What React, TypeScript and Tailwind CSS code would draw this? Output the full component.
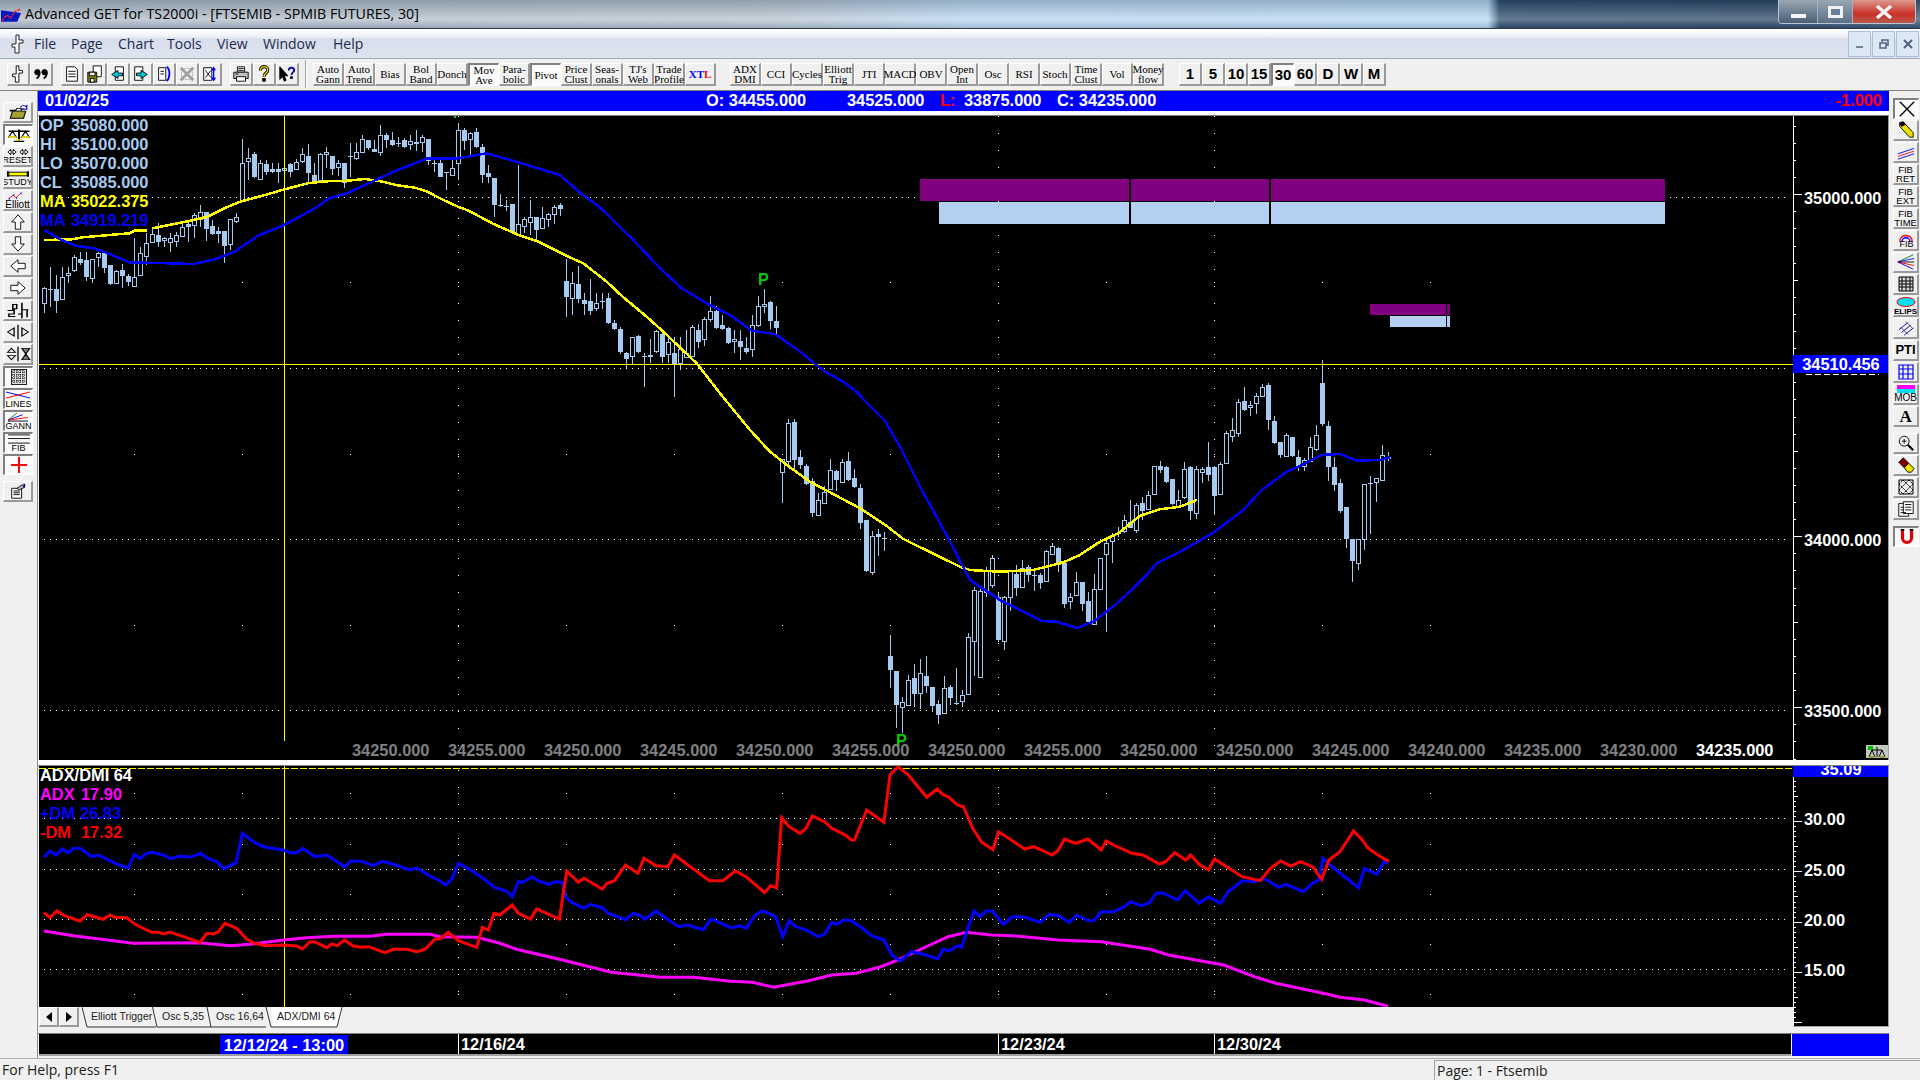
import type { ReactNode } from "react"

type Candle = [number, number, number, number, number]
type Pt = [number, number]

// candle rows are [wick high, body top, body bottom, wick low, filled], read off in thirds of a pixel
const segA: Candle[] = [
  [500,505,550,578,0],[440,508,508,560,1],[465,507,542,578,1],[440,470,537,540,0],[440,458,464,490,0],[405,412,450,455,0],[395,418,430,435,1],[395,420,470,482,1],[418,418,473,490,0],[395,400,412,440,0],
  [396,396,443,460,1],[435,435,493,495,1],[450,452,488,492,0],[432,451,469,505,1],[462,469,485,498,1],[355,470,498,502,0],[380,400,464,467,0],[340,370,408,435,0],[325,342,365,368,0],[310,345,365,382,1],
  [350,355,360,380,0],[340,354,366,395,0],[335,345,362,380,0],[310,320,347,350,0],[305,313,320,365,1],[280,284,314,355,0],[255,276,298,320,0],[275,276,326,362,1],[300,318,342,345,1],[320,333,342,370,1],
  [333,333,378,430,1],[298,298,372,390,0],[278,292,304,308,0],[58,130,240,245,0],[85,115,124,180,0],[97,102,170,175,1],[120,128,177,180,0],[120,133,155,165,1],[130,147,155,160,1],[128,147,155,188,1],
  [128,144,150,160,0],[128,132,155,170,1],[118,125,146,150,0],[85,103,124,130,0],[72,108,160,185,1],[130,165,187,190,1],[100,103,180,185,0],[80,97,103,145,0],[108,108,146,165,1],[120,130,140,168,0],
  [128,130,190,205,1],[70,108,108,170,1],[68,97,115,120,0],[45,58,95,97,0],[60,60,85,90,1],[60,87,95,97,1],[15,46,97,107,0],[40,46,60,85,1],[35,60,75,78,1],[52,68,68,82,1],
  [55,60,80,83,1],[45,62,73,90,0],[30,67,73,92,1],[45,52,67,95,0],[58,58,124,135,1],[110,130,130,157,1],[115,130,170,172,1],[155,155,155,210,1],[115,145,166,168,0],[10,30,130,180,0],
  [25,30,62,90,1],[35,40,58,108,0],[25,37,80,85,1],[72,82,165,188,1],[135,160,170,188,1],[175,175,255,290,1],[222,255,255,262,1],[240,257,257,272,1],[252,252,340,342,1],[135,313,345,345,0],
  [290,298,318,340,0],[240,290,305,345,0],[290,290,330,362,1],[262,293,325,327,0],[278,283,298,320,0],[255,262,283,312,0],[248,256,268,288,1],
]
const segB: Candle[] = [
  [58,124,170,230,1],[97,128,175,224,0],[78,132,176,188,1],[160,180,191,224,1],[118,183,212,224,1],[160,190,205,214,0],[160,184,184,208,1],[160,175,248,252,1],[240,250,268,270,1],[262,267,335,342,1],
  [335,340,358,385,1],[290,292,348,375,0],[285,289,335,338,1],[340,347,347,440,1],[298,344,349,368,0],[270,272,334,338,0],[275,282,350,368,1],[295,305,343,370,0],[292,340,373,470,1],[290,328,368,390,0],
  [270,340,350,350,0],[255,262,348,352,0],[252,270,305,325,1],[232,236,298,318,0],[168,214,238,245,0],[198,214,263,268,1],[225,255,268,270,1],[260,265,308,312,1],[270,298,304,340,0],[270,304,320,360,1],
  [292,324,335,342,1],[225,256,328,352,0],[168,199,254,260,0],[148,191,198,218,0],[184,186,242,268,1],[198,244,263,282,1],
]
const segC: Candle[] = [
  [658,658,695,788,0],[538,550,664,680,0],[538,546,660,690,1],[630,652,675,688,1],[672,678,732,735,1],[715,724,820,830,1],[760,780,824,826,0],[738,755,788,792,0],[658,691,746,748,0],[690,693,720,752,1],
  [658,667,725,728,0],[636,663,720,722,1],[688,714,741,744,1],[732,745,850,866,1],[840,840,994,996,1],[872,889,995,1004,0],[868,882,890,948,1],[877,893,893,933,1],
]
const segD: Candle[] = [
  [45,108,150,205,1],[153,153,255,323,1],[232,247,262,338,0],[165,181,255,258,0],[132,175,222,262,1],[118,160,218,268,0],[108,168,198,220,1],[201,201,258,276,1],[240,252,285,312,1],[168,205,278,282,0],
  [195,201,234,256,1],[145,248,248,256,1],[210,226,242,262,0],
]
const segE: Candle[] = [
  [40,52,222,225,0],[-100,-90,62,168,0],[-100,-88,170,172,0],[-160,-150,-84,-70,0],[-195,-186,-105,-95,0],[-80,-69,60,65,1],
]
const segF: Candle[] = [
  [738,742,872,900,0],[660,663,740,782,0],[645,672,714,738,1],[630,655,710,712,0],[645,652,675,695,1],[660,675,675,722,1],[670,675,698,716,1],[600,604,692,695,0],[580,589,611,615,0],[590,594,646,665,1],
  [635,640,762,775,1],[730,742,754,776,0],[667,697,735,737,0],[697,697,762,782,1],[725,753,816,818,1],[672,718,822,825,0],[625,625,718,720,0],[565,579,611,845,0],[548,559,574,638,0],[530,550,550,560,1],
  [495,511,544,550,0],[450,517,533,535,1],[460,466,540,550,0],[440,460,484,510,1],[423,436,476,480,0],[349,349,432,435,0],[333,349,360,368,1],[348,351,396,398,1],[388,388,462,465,1],[420,451,468,470,0],
  [335,358,440,448,0],[349,351,482,510,1],[349,358,488,508,0],[350,358,365,400,0],[277,351,375,392,1],[349,351,437,495,1],[336,343,431,435,0],[242,250,338,342,0],[205,241,257,276,0],[148,157,250,260,0],
  [110,154,180,183,1],[154,164,170,198,0],[128,137,158,192,0],[102,112,137,140,0],[100,105,209,240,1],[198,213,279,282,1],[276,276,315,325,1],[250,256,317,322,0],[262,262,319,322,1],[300,321,350,362,1],
  [325,329,349,362,0],[262,292,334,336,0],[225,256,298,302,0],[30,99,222,228,1],[212,228,351,392,1],[321,351,404,422,1],[388,400,483,490,1],[471,471,566,594,1],[568,568,632,695,1],[568,568,638,660,0],
  [403,403,566,600,0],[378,400,400,552,1],[385,385,395,456,0],[285,316,389,392,0],[306,322,328,332,1],
]
const segments: { x: number; y0: number; rows: Candle[] }[] = [
  { x: 44, y0: 120, rows: segA },
  { x: 566, y0: 240, rows: segB },
  { x: 782, y0: 240, rows: segC },
  { x: 890, y0: 620, rows: segD },
  { x: 968, y0: 620, rows: segE },
  { x: 1004, y0: 350, rows: segF },
]

const map = (rows: Pt[], x0: number, y0: number, fx: number): string =>
  rows.map(([x, y]) => `${(x0 + x / fx).toFixed(1)},${(y0 + y / 3).toFixed(1)}`).join(" ")

const yellow1 = map([[12,360],[90,358],[120,352],[250,340],[265,332],[300,331]], 40, 120, 2.8)
const yellow2 = [
  map([[315,325],[400,307],[470,290],[520,263],[560,245],[640,222],[685,208],[750,190],[800,184],[850,183],[910,177],[960,185],[1000,196],[1050,203],[1085,215],[1120,235],[1170,260],[1200,272],[1270,312],[1340,345],[1395,365],[1470,405]], 40, 120, 2.8),
  map([[200,48],[250,70],[320,125],[370,172],[440,230],[490,275],[590,370],[660,460],[750,570],[810,635],[860,675],[930,725],[1080,805],[1160,858],[1210,897],[1380,980],[1410,990],[1500,995]], 500, 240, 3),
  map([[0,665],[100,660],[190,637],[240,615],[300,575],[355,550],[420,497],[480,478],[540,470],[590,450]], 1000, 350, 3),
].join(" ")
const blueMa = [
  map([[12,330],[60,360],[100,377],[150,385],[190,400],[250,427],[360,430],[430,432],[490,418],[545,395],[610,347],[680,317],[770,265],[810,235],[860,220],[900,200],[990,155],[1085,115],[1170,115],[1250,100],[1340,127],[1455,165],[1520,225],[1568,262]], 40, 120, 2.8),
  map([[400,0],[480,85],[545,145],[620,190],[690,225],[755,272],[825,282],[900,335],[975,395],[1030,425],[1065,452],[1155,543],[1200,620],[1260,740],[1345,895],[1410,1020]], 500, 240, 3),
  map([[0,750],[125,813],[170,815],[230,834],[280,815],[345,765],[400,715],[435,680],[470,640],[545,603],[640,548],[730,480],[785,420],[860,365],[895,350],[965,315],[1020,312],[1070,332],[1140,330],[1170,322]], 1000, 350, 3),
].join(" ")

const dmPlus = [
  map([[132,352],[150,333],[168,346],[187,327],[205,338],[222,325],[240,325],[275,350],[295,345],[350,372],[385,384],[403,343],[420,356],[440,340],[455,337],[490,345],[512,356],[540,348],[570,352],[602,340],[620,354],[650,365],[672,386],[708,368],[727,280],[760,305],[790,320],[850,330],[870,338],[890,338],[908,325],[945,350],[980,345],[1035,380],[1050,364],[1085,364],[1120,377],[1145,364],[1165,368],[1230,390],[1250,384],[1290,408]], 0, 740, 3),
  map([[0,348],[10,360],[20,340],[30,295],[50,315],[70,340],[90,368],[108,378],[118,395],[128,350],[136,352],[150,335],[160,348],[178,358],[188,350],[200,352],[205,395],[215,412],[235,430],[245,418],[265,428],[275,445],[303,464],[315,445],[325,450],[335,463],[353,438],[365,455],[390,485],[405,480],[430,494],[443,462],[475,488],[490,482],[500,490],[515,450],[527,437],[548,455],[560,515],[570,467],[580,484],[600,497],[617,515],[628,508],[640,472],[648,478],[660,465],[672,467],[690,490],[705,512],[725,525],[738,570],[752,588],[770,560],[790,568],[813,582],[822,552],[832,558],[845,542],[852,547],[872,437],[882,455],[892,438],[902,438],[920,478],[935,455],[955,456],[980,472],[995,448],[1010,452],[1028,472],[1040,450],[1060,468],[1068,466],[1080,440],[1100,440],[1115,428],[1128,410],[1145,422],[1158,415],[1170,385],[1180,384],[1205,405],[1217,377],[1240,415],[1255,395],[1275,415],[1287,380],[1310,347],[1330,350],[1345,340],[1370,367],[1382,358],[1410,380],[1425,355],[1435,345],[1442,280],[1460,310],[1500,368],[1510,310],[1530,328],[1542,290],[1548,295]], 440, 765, 1.6333),
].join(" ")
const dmMinus = [
  map([[132,518],[150,533],[170,513],[195,528],[240,543],[262,524],[310,538],[330,525],[345,532],[380,533],[405,553],[455,577],[475,577],[490,582],[510,576],[600,607],[620,580],[640,582],[655,575],[675,550],[710,565],[740,598],[765,610],[795,617],[850,615],[890,618],[907,627],[930,605],[945,606],[980,623],[995,612],[1012,617],[1033,600],[1060,618],[1085,622],[1105,620],[1155,638],[1180,628],[1220,628],[1250,635],[1275,628],[1305,597],[1320,597],[1345,577],[1375,602],[1430,622],[1447,562],[1465,570],[1482,520],[1500,525]], 0, 740, 3),
  map([[118,420],[128,445],[148,462],[158,432],[195,462],[207,318],[226,352],[235,340],[265,372],[273,355],[285,347],[303,300],[323,325],[333,280],[353,302],[372,305],[383,270],[440,347],[462,347],[482,318],[500,335],[530,383],[540,362],[550,368],[558,158],[570,185],[588,205],[598,190],[608,153],[628,170],[640,190],[660,208],[672,225],[677,225],[697,135],[725,172],[735,30],[748,5],[765,30],[795,97],[812,72],[822,90],[830,95],[845,120],[855,125],[870,190],[885,232],[903,254],[912,200],[925,215],[955,252],[970,245],[1000,270],[1010,255],[1020,222],[1038,235],[1058,222],[1080,255],[1088,228],[1100,240],[1130,265],[1148,270],[1175,297],[1185,290],[1200,263],[1218,285],[1226,270],[1240,298],[1255,315],[1265,282],[1310,335],[1340,347],[1355,312],[1373,288],[1390,303],[1405,290],[1425,305],[1440,343],[1452,285],[1470,260],[1492,198],[1505,222],[1515,248],[1530,268],[1545,285],[1550,288]], 440, 765, 1.6333),
].join(" ")
const adxLine = [
  map([[132,573],[220,587],[400,610],[600,608],[690,617],[750,613],[850,600],[920,593],[1000,589],[1110,589],[1160,583],[1290,583],[1320,590],[1430,592],[1500,610]], 0, 740, 3),
  map([[125,553],[200,585],[280,622],[360,637],[415,637],[470,648],[510,652],[545,667],[600,648],[640,630],[680,625],[720,605],[750,583],[800,540],[830,515],[860,502],[900,510],[935,512],[1010,525],[1080,530],[1160,553],[1190,570],[1280,600],[1330,635],[1365,655],[1450,688],[1470,697],[1510,705],[1548,724]], 440, 765, 1.6333),
].join(" ")

const sparseX = Array.from({ length: 13 }, (_, i) => 134 + 108 * i)
const weekX = [458, 998, 1214]

function Dots({ ys, sparseYs, top, bottom, endX }: { ys: number[]; sparseYs: number[]; top: number; bottom: number; endX: number }) {
  const weekDots: number[] = []
  for (let y = top; y < bottom; y += 17) weekDots.push(y)
  return (
    <g fill="#ffffff" stroke="none" shapeRendering="crispEdges">
      {ys.map((y) => (
        <line key={y} x1={44} x2={endX} y1={y + 0.5} y2={y + 0.5} stroke="#ffffff" strokeDasharray="1 5" />
      ))}
      {sparseX.flatMap((x) => sparseYs.map((y) => <rect key={`${x}-${y}`} x={x} y={y} width={1} height={1} />))}
      {weekX.flatMap((x) => weekDots.map((y) => <rect key={`w${x}-${y}`} x={x} y={y} width={1} height={1} />))}
    </g>
  )
}

function Candles() {
  return (
    <g shapeRendering="crispEdges">
      {segments.flatMap((seg) =>
        seg.rows.map(([hi, top, bottom, lo, filled], i) => {
          const x = seg.x + 6 * i
          const t = Math.round(seg.y0 + top / 3)
          const b = Math.round(seg.y0 + bottom / 3)
          return (
            <g key={`${seg.x}-${i}`}>
              <rect x={x} y={seg.y0 + hi / 3} width={1} height={(lo - hi) / 3} fill="#a6caf0" />
              {t === b ? (
                <rect x={x - 2} y={t} width={5} height={1} fill="#a6caf0" />
              ) : filled ? (
                <rect x={x - 2} y={t} width={5} height={b - t} fill="#a6caf0" />
              ) : (
                <rect x={x - 1.5} y={t + 0.5} width={4} height={b - t} fill="#000000" stroke="#a6caf0" />
              )}
            </g>
          )
        }),
      )}
    </g>
  )
}

const bold16 = "font-bold text-[16.400px] leading-[19px] whitespace-nowrap"
const raised = "border-t border-l border-t-white border-l-white border-b-2 border-r-2 border-b-[#9a9a9a] border-r-[#9a9a9a] bg-[#f0f0f0]"
const pressed = "border-t-2 border-l-2 border-t-[#808080] border-l-[#808080] border-b border-r border-b-white border-r-white bg-[#fbfbfb]"

function Svg({ children, s = 18, w }: { children: ReactNode; s?: number; w?: number }) {
  return (
    <svg viewBox="0 0 20 20" width={w ?? s} height={s} preserveAspectRatio="none" fill="none" stroke="#000000" strokeWidth={1}>
      {children}
    </svg>
  )
}

const logoPath = "M8 1h3v5h4v3h-4v10H7v-6H4v-3h4z"
const page = "M4 2h9l3 3v13H4z"

const topIcons: ReactNode[][] = [
  [
    <Svg><path d={logoPath} fill="#ffffff" /></Svg>,
    <Svg><circle cx="6" cy="8" r="3" fill="#000" /><path d="M8.5 9c0 3-2 5-3.500 6" strokeWidth="2" /><circle cx="14" cy="8" r="3" fill="#000" /><path d="M16.500 9c0 3-2 5-3.500 6" strokeWidth="2" /></Svg>,
  ],
  [
    <Svg><path d={page} fill="#fff" /><path d="M6 7h8M6 10h8M6 13h8" /></Svg>,
    <Svg><path d="M8 1h9v12H8z" fill="#fff" /><path d="M2 8h10v11H2z" fill="#808000" /><path d="M4 8h6v4H4zM5 15h4v4H5z" fill="#fff" /></Svg>,
    <Svg><path d="M7 2h9v15H7z" fill="#fff" /><path d="M10 6v3h5v3h-5v3L3 10.500z" fill="#00c8d8" /></Svg>,
    <Svg><path d="M3 2h9v15H3z" fill="#fff" /><path d="M10 6v3H5v3h5v3l7-4.500z" fill="#00c8d8" /></Svg>,
    <Svg><path d="M4 3h8v14H4z" fill="#fff" /><path d="M6 7h4M6 10h4" /><path d="M13 2c4 3 4 12 0 16" stroke="#0000ff" strokeWidth="2" /></Svg>,
    <Svg><path d="M3 3l14 14M17 3L3 17" stroke="#a0a0a0" strokeWidth="3" /><path d="M4 4h12v12H4z" stroke="#a0a0a0" strokeDasharray="2 1" /></Svg>,
    <Svg><path d="M3 3h9v14H3z" fill="#fff" /><path d="M5 6l6 8M11 6l-6 8" /><path d="M14 3v14M12 6l2-3 2 3M12 14l2 3 2-3" stroke="#0000ff" strokeWidth="1.500" /></Svg>,
  ],
  [
    <Svg><path d="M6 2h8v6H6z" fill="#fff" /><path d="M2 8h16v7H2z" fill="#c0c0c0" /><path d="M5 13h10v5H5z" fill="#fff" /><path d="M7 4h6M7 6h6M4 10h3" /></Svg>,
    <Svg><path d="M6 6c0-6 9-5 8 0 0 3-4 3-4 7" stroke="#000" strokeWidth="3.500" /><path d="M6 6c0-6 9-5 8 0 0 3-4 3-4 7" stroke="#f0e000" strokeWidth="1.500" /><path d="M8.500 15h3v3h-3z" fill="#000" /></Svg>,
    <Svg><path d="M2 2v14l3-3 2 5 2-1-2-5h4z" fill="#000" /><path d="M12 6c0-4 6-4 6 0 0 2-3 2-3 5" stroke="#0000a0" strokeWidth="2" /><path d="M14 13h2v2h-2z" fill="#0000a0" /></Svg>,
  ],
]

const studyButtons: [string, boolean?, string?][] = [
  ["Auto Gann"], ["Auto Trend"], ["Bias"], ["Bol Band"], ["Donch"], ["Mov Ave", true], ["Para-bolic"], ["Pivot", true], ["Price Clust"], ["Seas-onals"], ["TJ's Web"], ["Trade Profile"], ["XTL", false, "xtl"],
]
const indicatorButtons = ["ADX DMI", "CCI", "Cycles", "Elliott Trig", "JTI", "MACD", "OBV", "Open Int", "Osc", "RSI", "Stoch", "Time Clust", "Vol", "Money flow"]
const periods = ["1", "5", "10", "15", "30", "60", "D", "W", "M"]

function Toolbar() {
  return (
    <div className="h-[32px] flex items-start pt-[4px] pl-[7px] bg-[#f0f0f0] border-b border-b-[#808080] [font-family:'Liberation_Serif',serif]">
      {topIcons.map((group, g) => (
        <div key={g} className={g === 0 ? "flex" : "flex ml-[8px]"}>
          {group.map((icon, i) => (
            <div key={i} className={`w-[23px] h-[23px] flex items-center justify-center ${raised}`}>
              {icon}
            </div>
          ))}
        </div>
      ))}
      <div className="w-[2px] h-[28px] -mt-[3px] mx-[6px] border-l border-l-[#a0a0a0] border-r border-r-white" />
      <div className="flex">
        {studyButtons.map(([label, on, kind]) => (
          <div key={label} className={`w-[31px] h-[23px] flex items-center justify-center text-center text-[11px] leading-[10px] ${on ? pressed : raised}`}>
            {kind === "xtl" ? (
              <span className="font-bold text-[11px]">
                <span className="text-[#0000ff]">XT</span>
                <span className="text-[#ff0000]">L</span>
              </span>
            ) : (
              <span>{label}</span>
            )}
          </div>
        ))}
      </div>
      <div className="flex ml-[14px]">
        {indicatorButtons.map((label) => (
          <div key={label} className={`w-[31px] h-[23px] flex items-center justify-center text-center text-[11px] leading-[10px] ${raised}`}>
            <span>{label}</span>
          </div>
        ))}
      </div>
      <div className="flex ml-[15px] [font-family:'Liberation_Sans',sans-serif] font-bold text-[15px]">
        {periods.map((p) => (
          <div key={p} className={`w-[23px] h-[23px] flex items-center justify-center ${p === "30" ? pressed : raised}`}>
            {p}
          </div>
        ))}
      </div>
    </div>
  )
}

function Tiny({ children, top }: { children: ReactNode; top?: ReactNode }) {
  return (
    <div className="flex flex-col items-center justify-center leading-none [font-family:'Liberation_Sans',sans-serif]">
      {top}
      <span className="text-[9px] leading-[9px] whitespace-nowrap">{children}</span>
    </div>
  )
}

const leftButtons: { icon: ReactNode; on?: boolean; gap?: boolean }[] = [
  { icon: <Svg s={18} w={22}><path d="M3 8h5l1-2h4v3H3z" fill="#fff" /><path d="M3 17l2-8h12l-2 8z" fill="#a8a030" /><path d="M12 5c2-3 4-3 5-1l1-1v4h-4l1-1" stroke="#0000a0" /></Svg> },
  { on: true, icon: <Svg s={17} w={26}><path d="M2 5h16M10 3v13M6 17h8" strokeWidth="1.500" /><path d="M5 5l-3 7h6zM15 5l-3 7h6z" /><path d="M2 12h6M12 12h6M8 15h4" stroke="#e8d800" strokeWidth="2" /></Svg> },
  { icon: <Tiny top={<svg viewBox="0 0 24 8" width={22} height={8} fill="none" stroke="#000"><path d="M1 4l3-3v2h3V1l3 3-3 3V5H4v2zM14 4l3-3v2h3V1l3 3-3 3V5h-3v2z" /></svg>}>RESET</Tiny> },
  { icon: <Tiny top={<svg viewBox="0 0 24 8" width={22} height={8}><path d="M1 1v6M23 1v6" stroke="#000" strokeWidth="2" /><rect x="2" y="2" width="20" height="4" fill="#ffff00" stroke="#000" /></svg>}>STUDY</Tiny> },
  { icon: <Tiny top={<svg viewBox="0 0 24 9" width={22} height={9} fill="none"><path d="M3 8l5-4 3 3 5-5" stroke="#ff0000" /><path d="M3 8h1M8 4h1M11 7h1M16 2h1" stroke="#0000ff" strokeWidth="2" /></svg>}><span className="text-[10px]">Elliott</span></Tiny> },
  { icon: <Svg><path d="M10 2l7 8h-4v8H7v-8H3z" fill="#fff" /></Svg> },
  { icon: <Svg><path d="M10 18l7-8h-4V2H7v8H3z" fill="#fff" /></Svg> },
  { icon: <Svg><path d="M2 10l8-7v4h8v6h-8v4z" fill="#fff" /></Svg> },
  { icon: <Svg><path d="M18 10l-8-7v4H2v6h8v4z" fill="#fff" /></Svg> },
  { icon: <Svg s={17} w={26}><path d="M2 10h4V3h3v5h-2v6H3v3h5" strokeWidth="1.200" /><path d="M13 1v18M13 9h5M10 14h3M17 9v9" strokeWidth="1.200" /></Svg> },
  { icon: <Svg s={16} w={26}><path d="M10 1v18" /><path d="M2 10l5-5v10zM18 10l-5-5v10z" /></Svg> },
  { icon: <Svg s={16} w={26}><path d="M10 1v18" /><path d="M5 3l3 5H2zM5 17l3-5H2z" /><path d="M13 3h6l-3 7zM13 17h6l-3-7z" fill="#808080" /></Svg> },
  { on: true, icon: <svg viewBox="0 0 16 16" width={16} height={16}><rect width="16" height="16" fill="#222" /><path d="M1 1h14v14H1z" fill="#e0e0e0" /><path d="M1 3h14M1 6h14M1 9h14M1 12h14M3 1v14M6 1v14M9 1v14M12 1v14" stroke="#000" strokeDasharray="1 1" /></svg> },
  { on: true, icon: <Tiny top={<svg viewBox="0 0 26 10" width={26} height={10} fill="none"><path d="M1 2l24 6" stroke="#0000ff" /><path d="M1 8l24-6" stroke="#ff0000" /></svg>}>LINES</Tiny> },
  { on: true, icon: <Tiny top={<svg viewBox="0 0 26 11" width={26} height={10} fill="none"><path d="M2 9l10-8" stroke="#008000" /><path d="M2 9l16-6" stroke="#0000ff" /><path d="M2 9l22-3" stroke="#ff0000" /><path d="M2 10h22" stroke="#000" /></svg>}>GANN</Tiny> },
  { on: true, icon: <Tiny top={<svg viewBox="0 0 26 11" width={26} height={10}><path d="M1 1h24M1 5h24M1 10h24" stroke="#000" /></svg>}>FIB</Tiny> },
  { on: true, icon: <svg viewBox="0 0 16 16" width={16} height={16}><path d="M0 8h16M8 0v16" stroke="#ff0000" strokeWidth="2" /></svg> },
  { gap: true, icon: <Svg><path d="M3 7h11v11H3z" fill="#fff" /><path d="M5 10h7M5 12h7M5 14h7" /><path d="M9 7l6-4 2 3-6 3z" fill="#c0c0c0" /><path d="M17 2v4" stroke="#0000a0" strokeWidth="2" /></Svg> },
]

const rightButtons: { icon: ReactNode; on?: boolean; gap?: boolean }[] = [
  { on: true, icon: <Svg><path d="M2 2l16 16M18 2L2 18" strokeWidth="1.500" /></Svg> },
  { icon: <Svg><path d="M3 2l4-1 11 12v5h-4L3 6z" fill="#f0e000" /><path d="M3 2l4-1 2 3-4 2z" fill="#000" /></Svg> },
  { icon: <Svg><path d="M1 12l18-6" stroke="#0000ff" /><path d="M1 15l18-6" stroke="#ff0000" /><path d="M1 18l18-6" stroke="#0000ff" /></Svg> },
  { icon: <Tiny2 a="FIB" b="RET" /> },
  { icon: <Tiny2 a="FIB" b="EXT" /> },
  { icon: <Tiny2 a="FIB" b="TIME" /> },
  { icon: <div className="relative"><Svg><path d="M3 12a7 7 0 0 1 14 0" stroke="#ff0000" strokeWidth="1.500" /><path d="M5.500 12a4.500 4.500 0 0 1 9 0" stroke="#0000ff" strokeWidth="1.500" /></Svg><span className="absolute left-[3px] top-[9px] text-[9px] leading-[9px] [font-family:'Liberation_Sans',sans-serif]">FIB</span></div> },
  { icon: <Svg><path d="M1 10l17-8" stroke="#008000" /><path d="M1 10l18-4" stroke="#0000ff" /><path d="M1 10h18" stroke="#000" /><path d="M1 10l18 4" stroke="#ff0000" /><path d="M1 10l17 8" stroke="#0000ff" /></Svg> },
  { icon: <svg viewBox="0 0 16 16" width={16} height={16} fill="none"><path d="M1 1h14v14H1z" fill="#d8d8d8" /><path d="M1 1h14v14H1zM1 5h14M1 8h14M1 11h14M4 1v14M8 1v14M12 1v14" stroke="#000" strokeWidth="1" /></svg> },
  { icon: <Tiny top={<svg viewBox="0 0 20 10" width={20} height={10}><ellipse cx="10" cy="5" rx="9" ry="4.500" fill="#00e0f0" stroke="#ff0000" /></svg>}><span className="text-[8px] font-bold">ELIPS</span></Tiny> },
  { icon: <Svg><path d="M2 12l10-8M5 15l10-8M8 18l10-8" stroke="#0000a0" /><path d="M4 9l8 8M10 3l8 8" stroke="#404080" /></Svg> },
  { icon: <span className="font-bold text-[13px] [font-family:'Liberation_Sans',sans-serif]">PTI</span> },
  { icon: <svg viewBox="0 0 16 16" width={16} height={16} fill="none" stroke="#0000ff"><path d="M1 1h14v14H1zM1 5h14M1 10h14M5 1v14M10 1v14" strokeWidth="1.200" /></svg> },
  { icon: <Tiny top={<svg viewBox="0 0 18 8" width={18} height={8}><rect width="18" height="4" fill="#ff00ff" /><rect y="4" width="18" height="4" fill="#00e0f0" /></svg>}><span className="text-[10px]">MOB</span></Tiny> },
  { icon: <span className="font-bold text-[17px] leading-[17px] [font-family:'Liberation_Serif',serif]">A</span> },
  { gap: true, icon: <Svg><circle cx="8" cy="8" r="5.500" /><path d="M12 12l6 6" strokeWidth="2.500" /><path d="M5.500 8h5M8 5.500v5" /></Svg> },
  { icon: <Svg><path d="M2 7l5-5 6 6-5 5z" fill="#800000" /><path d="M8 13l5-5 6 6-3 4h-4z" fill="#f0e000" /></Svg> },
  { icon: <svg viewBox="0 0 16 16" width={16} height={16} fill="none" stroke="#000"><path d="M1 1h14v14H1z" /><path d="M1 5l4-4M1 11L11 1M5 15L15 5M11 15l4-4M1 5l10 10M1 11l4 4M5 1l10 10M11 1l4 4" strokeDasharray="2 1" /></svg> },
  { icon: <Svg><path d="M2 4h11v14H2z" fill="#fff" /><path d="M7 2h11v13H7z" fill="#fff" /><path d="M9 5h7M9 8h7M9 11h7" /><path d="M4 8h3M4 11h3M4 14h6" /></Svg> },
  { gap: true, on: true, icon: <svg viewBox="0 0 20 20" width={18} height={18} fill="none"><path d="M5 2v9a5 5 0 0 0 10 0V2" stroke="#e00000" strokeWidth="3.500" /><path d="M3 2h4M13 2h4" stroke="#000" strokeWidth="2" /></svg> },
]

function Tiny2({ a, b }: { a: string; b: string }) {
  return (
    <div className="flex flex-col items-center text-[9.500px] leading-[9px] [font-family:'Liberation_Sans',sans-serif]">
      <span>{a}</span>
      <span>{b}</span>
    </div>
  )
}

function TitleBar() {
  return (
    <div className="relative h-[28px] flex items-center overflow-hidden bg-[linear-gradient(90deg,#aab6c2_0%,#b4c0cc_40%,#b8d4ee_50%,#b4d6f2_77.500%,#224162_78.100%,#1f3d5c_92%,#2e4c6c_100%)]">
      <div className="absolute inset-0 bg-[linear-gradient(180deg,rgba(40,60,80,0.25)_0%,rgba(255,255,255,0.30)_70%,rgba(60,90,120,0.20)_100%)]" />
      <svg viewBox="0 0 22 16" width={21} height={16} className="relative ml-[1px] mt-[2px]">
        <path d="M0 3l21 3-4 9H0z" fill="#0018c0" />
        <path d="M1 14l5-6 4 3 5-7 5-2" fill="none" stroke="#ff2030" strokeWidth="1.500" strokeDasharray="3 1" />
      </svg>
      <span className="relative ml-[3px] text-[14.250px] text-[#000000] [font-family:'Open_Sans',sans-serif] whitespace-nowrap">
        Advanced GET for TS2000i - [FTSEMIB - SPMIB FUTURES, 30]
      </span>
      <div className="absolute right-[4px] top-0 flex h-[24px] rounded-b-[4px] border border-t-0 border-[#b8c4d0] overflow-hidden">
        <div className="w-[39px] flex items-end justify-center pb-[5px] border-r border-r-[#a0b0c0] bg-[linear-gradient(180deg,#9aa6b2_0%,#4a6078_100%)]">
          <div className="w-[15px] h-[4px] bg-[#f4f4f4]" />
        </div>
        <div className="w-[35px] flex items-center justify-center border-r border-r-[#a0b0c0] bg-[linear-gradient(180deg,#9aa6b2_0%,#5a7088_100%)]">
          <div className="w-[15px] h-[12px] border-[3px] border-[#f0f0f0] bg-[#6a8098]" />
        </div>
        <div className="w-[62px] flex items-center justify-center bg-[linear-gradient(180deg,#dc9a8c_0%,#cc3028_60%,#b85848_100%)]">
          <svg viewBox="0 0 18 14" width={18} height={14}>
            <path d="M2 1l14 12M16 1L2 13" stroke="#f4f4f4" strokeWidth="3.500" />
          </svg>
        </div>
      </div>
    </div>
  )
}

function MenuBar() {
  const items: [string, string][] = [
    ["File", "w-[37px]"], ["Page", "w-[47px]"], ["Chart", "w-[49px]"], ["Tools", "w-[50px]"], ["View", "w-[46px]"], ["Window", "w-[70px]"], ["Help", "w-[40px]"],
  ]
  return (
    <div className="h-[31px] flex items-center border-t border-t-[#2e3a46] border-b border-b-[#a4a8b0] bg-[linear-gradient(180deg,#ffffff_0%,#eef1f7_25%,#d8deec_35%,#dfe3ef_100%)] text-[14px] text-[#1c2a50] [font-family:'Open_Sans',sans-serif]">
      <div className="w-[34px] flex justify-center pl-[1px]">
        <Svg s={20}><path d={logoPath} fill="#ffffff" stroke="#222222" /></Svg>
      </div>
      {items.map(([label, w]) => (
        <span key={label} className={w}>{label}</span>
      ))}
      <div className="ml-auto mr-[1px] flex gap-[1px]">
        {["min", "max", "close"].map((k) => (
          <div key={k} className="w-[23px] h-[26px] flex items-center justify-center bg-[#dce8f4] border border-[#a8c0d8]">
            <svg viewBox="0 0 10 10" width={10} height={10} fill="none" stroke="#50627c" strokeWidth="1.500">
              {k === "min" && <path d="M1 8h7" />}
              {k === "max" && <path d="M1 4h6v5H1zM3 3V1h6v5H7" />}
              {k === "close" && <path d="M1 1l8 8M9 1L1 9" strokeWidth="2" />}
            </svg>
          </div>
        ))}
      </div>
    </div>
  )
}

function SideColumn({ buttons, className }: { buttons: typeof leftButtons; className: string }) {
  return (
    <div className={className}>
      {buttons.map((b, i) => (
        <div
          key={i}
          className={`flex items-center justify-center shrink-0 overflow-hidden ${b.on ? pressed : raised} ${b.gap ? "mt-[6px]" : "mt-[1px]"} h-[21px]`}
        >
          {b.icon}
        </div>
      ))}
    </div>
  )
}

const gridYs = [197, 368, 539, 710]
const priceLabels: [string, number][] = [["35000.000", 197], ["34000.000", 539], ["33500.000", 710]]
const mainTicks = Array.from({ length: 38 }, (_, i) => 9.800 + i * 17.1)
const lowerTicks = Array.from({ length: 50 }, (_, i) => 2.800 + i * 5.03)
const openValues = ["34250.000", "34255.000", "34250.000", "34245.000", "34250.000", "34255.000", "34250.000", "34255.000", "34250.000", "34250.000", "34245.000", "34240.000", "34235.000", "34230.000"]

function MainPane() {
  return (
    <div className="flex h-[644px] pl-[1px]">
      <div className="relative w-[1754px] bg-black">
        <svg viewBox="39 116 1754 644" width={1754} height={644} className="block">
          <Dots ys={gridYs} sparseYs={[282, 454, 625]} top={116} bottom={760} endX={1786} />
          <rect x="454" y="116" width="2" height="2" fill="#00d000" />
          <Candles />
          <g shapeRendering="crispEdges">
            <rect x="39" y="364" width="1754" height="1" fill="#ffff00" />
            <rect x="284" y="116" width="1" height="625" fill="#ffff00" />
            <rect x="920" y="179" width="745" height="22" fill="#800080" />
            <rect x="939" y="202" width="726" height="22" fill="#b4d0f0" />
            <rect x="1129" y="179" width="2" height="45" fill="#000000" />
            <rect x="1269" y="179" width="2" height="45" fill="#000000" />
            <rect x="1370" y="304" width="80" height="11" fill="#800080" />
            <rect x="1390" y="316" width="60" height="11" fill="#b4d0f0" />
            <rect x="1446" y="304" width="1" height="23" fill="#000000" />
          </g>
          <g fill="none" strokeWidth="2.500" shapeRendering="crispEdges">
            <polyline points={yellow1} stroke="#ffff00" />
            <polyline points={yellow2} stroke="#ffff00" />
            <polyline points={blueMa} stroke="#0000ff" />
          </g>
        </svg>
        <div className={`absolute left-[1px] top-0 ${bold16} text-[#a6caf0]`}>
          {[["OP", "35080.000"], ["HI", "35100.000"], ["LO", "35070.000"], ["CL", "35085.000"]].map(([k, v]) => (
            <div key={k} className="flex h-[19px]"><span className="w-[31px]">{k}</span><span>{v}</span></div>
          ))}
          <div className="flex h-[19px] text-[#ffff00]"><span className="w-[31px]">MA</span><span>35022.375</span></div>
          <div className="flex h-[19px] text-[#0000ff]"><span className="w-[31px]">MA</span><span>34919.219</span></div>
        </div>
        <span className="absolute left-[719px] top-[154px] text-[#00d000] font-bold text-[16px] leading-[19px]">P</span>
        <span className="absolute left-[857px] top-[615px] text-[#00d000] font-bold text-[16px] leading-[19px]">P</span>
        <div className={`absolute left-[313px] top-[625px] flex gap-[20px] ${bold16} text-[#808080]`}>
          {openValues.map((v, i) => <span key={i} className="w-[76px]">{v}</span>)}
          <span className="w-[76px] text-white">34235.000</span>
        </div>
      </div>
      <div className="relative w-[96px] bg-black border-r border-r-[#a0a0a0] overflow-hidden">
        <svg viewBox="0 0 95 644" width={95} height={644} className="block" shapeRendering="crispEdges">
          <rect x="0" y="0" width="1" height="644" fill="#ffffff" />
          {mainTicks.map((y, i) => {
            const major = i % 10 === 4
            const mid = i % 5 === 4
            return <rect key={i} x="1" y={Math.round(y)} width={major ? 8 : mid ? 4 : 2} height="1" fill="#ffffff" />
          })}
          <line x1="13" x2="86" y1="258.500" y2="258.500" stroke="#ffffff" strokeDasharray="6 3" />
        </svg>
        {priceLabels.map(([label, y]) => (
          <span key={label} className={`absolute left-[11px] ${bold16} text-white`} style={{ top: y - 116 - 8 }}>{label}</span>
        ))}
        <div className={`absolute left-0 top-[239px] w-[96px] h-[18px] bg-[#0000ff] text-white text-center ${bold16}`}>34510.456</div>
        <svg viewBox="0 0 22 13" width={22} height={13} className="absolute right-0 bottom-[2px]">
          <rect width="22" height="13" fill="#c0c8c0" />
          <rect x="2" y="1" width="5" height="4" fill="#00c000" />
          <path d="M3 12l3-7 3 7zM13 12l3-7 3 7zM6 5h10M11 2v10" fill="none" stroke="#000000" />
          <path d="M3 12h6M13 12h6" stroke="#e8d800" />
        </svg>
      </div>
    </div>
  )
}

function TabStrip() {
  const tabs: [string, string][] = [
    ["Elliott Trigger", "w-[71px] ml-[11px]"], ["Osc 5,35", "w-[54px]"], ["Osc 16,64", "w-[61px]"], ["ADX/DMI 64", "w-[56px]"],
  ]
  return (
    <div className="relative h-[21px] flex items-center bg-[#f0f0f0] text-[10.500px] text-[#202020] [font-family:'Liberation_Sans',sans-serif]">
      <svg viewBox="0 0 300 21" width={300} height={21} className="absolute left-[43px] top-0" fill="none" stroke="#303030">
        <path d="M189 0l2 20h64l5-20z" fill="#ffffff" stroke="none" />
        <path d="M0 0l5 20h69M70.500 0l4.500 20h54M125 0l4 20h55M184 0l5 20h66l5-20" />
      </svg>
      <div className="relative flex w-[41px] h-[20px]">
        {[true, false].map((prev) => (
          <div key={String(prev)} className={`w-[20px] h-[20px] flex items-center justify-center ${raised}`}>
            <svg viewBox="0 0 8 10" width={8} height={10}>
              <path d={prev ? "M7 0v10L1 5z" : "M1 0v10l6-5z"} fill="#000000" />
            </svg>
          </div>
        ))}
      </div>
      {tabs.map(([label, cls]) => (
        <span key={label} className={`relative whitespace-nowrap ${cls}`}>{label}</span>
      ))}
    </div>
  )
}

function LowerPane() {
  return (
    <div className="flex h-[261px] pl-[1px]">
      <div className="w-[1754px] flex flex-col">
        <div className="relative h-[241px] bg-black">
          <svg viewBox="39 766 1754 241" width={1754} height={241} className="block">
            <Dots ys={[818, 869, 919, 969]} sparseYs={[793, 844, 894, 944, 994]} top={770} bottom={1006} endX={1786} />
            <g shapeRendering="crispEdges">
              <line x1="39" x2="1793" y1="768.500" y2="768.500" stroke="#ffff00" strokeDasharray="7 2" />
              <rect x="284" y="766" width="1" height="241" fill="#ffff00" />
            </g>
            <g fill="none" strokeWidth="3">
              <polyline points={adxLine} stroke="#ff00ff" />
              <polyline points={dmPlus} stroke="#0000ff" />
              <polyline points={dmMinus} stroke="#ff0000" />
            </g>
          </svg>
          <div className={`absolute left-[1px] top-0 ${bold16}`}>
            <div className="h-[19px] text-white">ADX/DMI 64</div>
            <div className="h-[19px] text-[#ff00ff] flex"><span className="w-[41px]">ADX</span><span>17.90</span></div>
            <div className="h-[19px] text-[#0000ff] flex"><span className="w-[40px]">+DM</span><span>26.83</span></div>
            <div className="h-[19px] text-[#ff0000] flex"><span className="w-[41px]">-DM</span><span>17.32</span></div>
          </div>
        </div>
        <TabStrip />
      </div>
      <div className="relative w-[96px] bg-black border-r border-b border-[#a0a0a0] overflow-hidden">
        <svg viewBox="0 0 95 260" width={95} height={260} className="block" shapeRendering="crispEdges">
          <rect x="0" y="10" width="1" height="250" fill="#ffffff" />
          {lowerTicks.map((y, i) => {
            const major = i % 10 === 8
            const mid = i % 5 === 3
            return <rect key={i} x="1" y={Math.round(y + 12)} width={major ? 8 : mid ? 4 : 2} height="1" fill="#ffffff" />
          })}
        </svg>
        {[["30.00", 53], ["25.00", 104], ["20.00", 154], ["15.00", 204]].map(([label, top]) => (
          <span key={label} className={`absolute left-[11px] ${bold16} text-white`} style={{ top: Number(top) - 9 }}>{label}</span>
        ))}
        <div className={`absolute left-0 top-0 w-[96px] h-[11px] bg-[#0000ff] text-white text-center overflow-hidden ${bold16}`}>
          <div className="-mt-[6px]">35.09</div>
        </div>
      </div>
    </div>
  )
}

function DateRow() {
  return (
    <div className="flex h-[22px]">
      <div className={`w-[1752px] ml-[1px] bg-black border-b-2 border-b-[#a0a0a0] flex text-white ${bold16}`}>
        <span className="ml-[181px] w-[128px] h-[19px] mt-[1px] pt-[1px] bg-[#0000ff] text-center">12/12/24 - 13:00</span>
        <span className="ml-[110px] w-[540px] border-l border-l-white pl-[2px] pt-[1px]">12/16/24</span>
        <span className="w-[216px] border-l border-l-white pl-[2px] pt-[1px]">12/23/24</span>
        <span className="border-l border-l-white pl-[2px] pt-[1px]">12/30/24</span>
      </div>
      <div className="ml-[1px] w-[97px] bg-[#0000ff]" />
    </div>
  )
}

function QuoteBar() {
  return (
    <div className={`h-[20px] flex items-center pb-[2px] bg-[#0000ff] text-white ${bold16}`}>
      <span className="w-[668px] pl-[7px]">01/02/25</span>
      <span className="w-[141px]">O: 34455.000</span>
      <span className="w-[93px]">34525.000</span>
      <span className="w-[24px] text-[#ff0000]">L:</span>
      <span className="w-[93px]">33875.000</span>
      <span>C: 34235.000</span>
      <span className="ml-auto pr-[7px] text-[#ff0000]">-1.000</span>
    </div>
  )
}

function StatusBar() {
  return (
    <div className="h-[22px] flex items-end bg-[#f0f0f0] border-t border-t-[#b0b0b0] text-[14px] leading-[20px] text-[#202020] [font-family:'Open_Sans',sans-serif]">
      <span className="w-[1434px] pl-[2px]">For Help, press F1</span>
      <span className="flex-1 h-[20px] pl-[2px] border-t border-l border-[#a0a0a0]">Page: 1 - Ftsemib</span>
    </div>
  )
}

export default function App() {
  return (
    <div className="w-[1920px] h-[1080px] flex flex-col overflow-hidden bg-[#f0f0f0] [font-family:'Liberation_Sans',sans-serif]">
      <TitleBar />
      <MenuBar />
      <Toolbar />
      <div className="h-[967px] flex">
        <SideColumn buttons={leftButtons} className="w-[38px] flex flex-col pl-[3px] pr-[4px] pt-[10px] border-r border-r-[#909090]" />
        <div className="w-[1852px] flex flex-col">
          <QuoteBar />
          <div className="h-[5px] bg-white border-b border-b-[#808080]" />
          <MainPane />
          <div className="h-[6px] bg-white border-b border-b-[#808080]" />
          <LowerPane />
          <div className="h-[7px] border-b border-b-[#808080]" />
          <DateRow />
        </div>
        <SideColumn buttons={rightButtons} className="flex-1 flex flex-col pl-[4px] pr-[3px] pt-[6px]" />
      </div>
      <StatusBar />
    </div>
  )
}
